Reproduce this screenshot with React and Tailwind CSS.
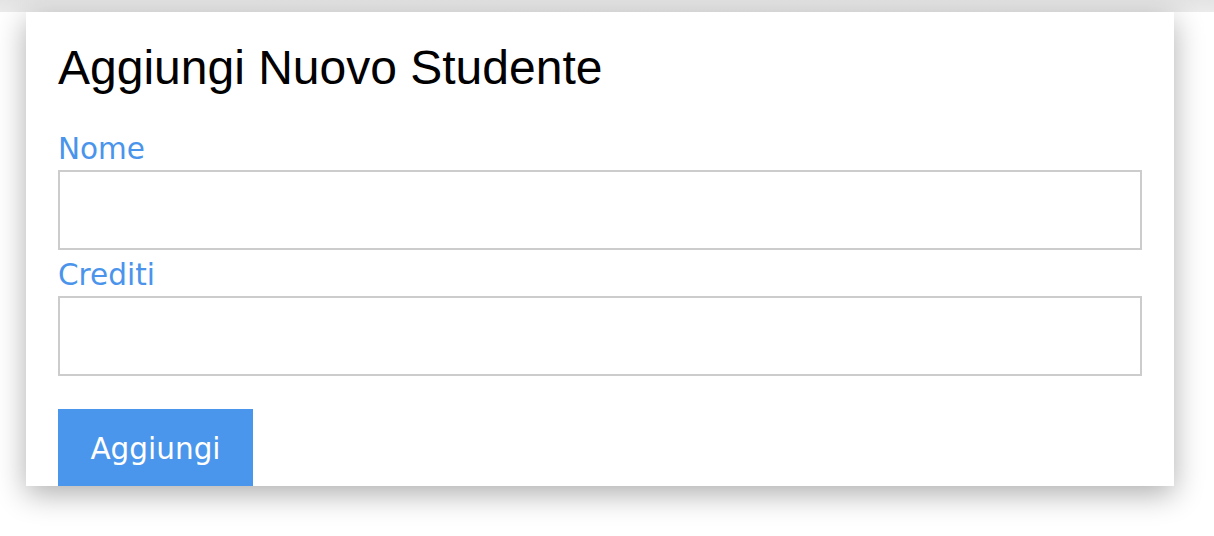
import React from "react";

const Field = ({ label, className = "" }) => (
	<div className={className}>
		<label className="block text-[29.5px] leading-[30px] text-[#4a94ec] mb-[6px]">{label}</label>
		<input type="text" className="block w-full h-[80px] border-2 border-[#cccccc] bg-white outline-none" />
	</div>
);

const App = () => {
	return (
		<div className="min-h-[536px] bg-white" style={{ fontFamily: '"DejaVu Sans", Verdana, sans-serif' }}>
			{/* leftover shadow from the block above */}
			<div className="h-[12px] bg-gradient-to-b from-[#e4e4e4] to-[#ebebeb]" />

			<div className="mx-[26px] w-[1148px] h-[474px] overflow-hidden bg-white shadow-[0_8px_28px_rgba(0,0,0,0.32)] px-[32px] pt-[32px]">
				<h2
					className="text-[48px] leading-[48px] text-black mb-[42px]"
					style={{ fontFamily: '"Liberation Sans", Arial, sans-serif' }}
				>
					Aggiungi Nuovo Studente
				</h2>

				<Field label="Nome" className="mb-[10px]" />
				<Field label="Crediti" />

				<button className="mt-[33px] h-[77px] w-[195px] bg-[#4a96ec] text-white text-[29.5px] leading-[30px] flex items-center justify-center pt-[3px]">
					Aggiungi
				</button>
			</div>
		</div>
	);
};

export default App;
